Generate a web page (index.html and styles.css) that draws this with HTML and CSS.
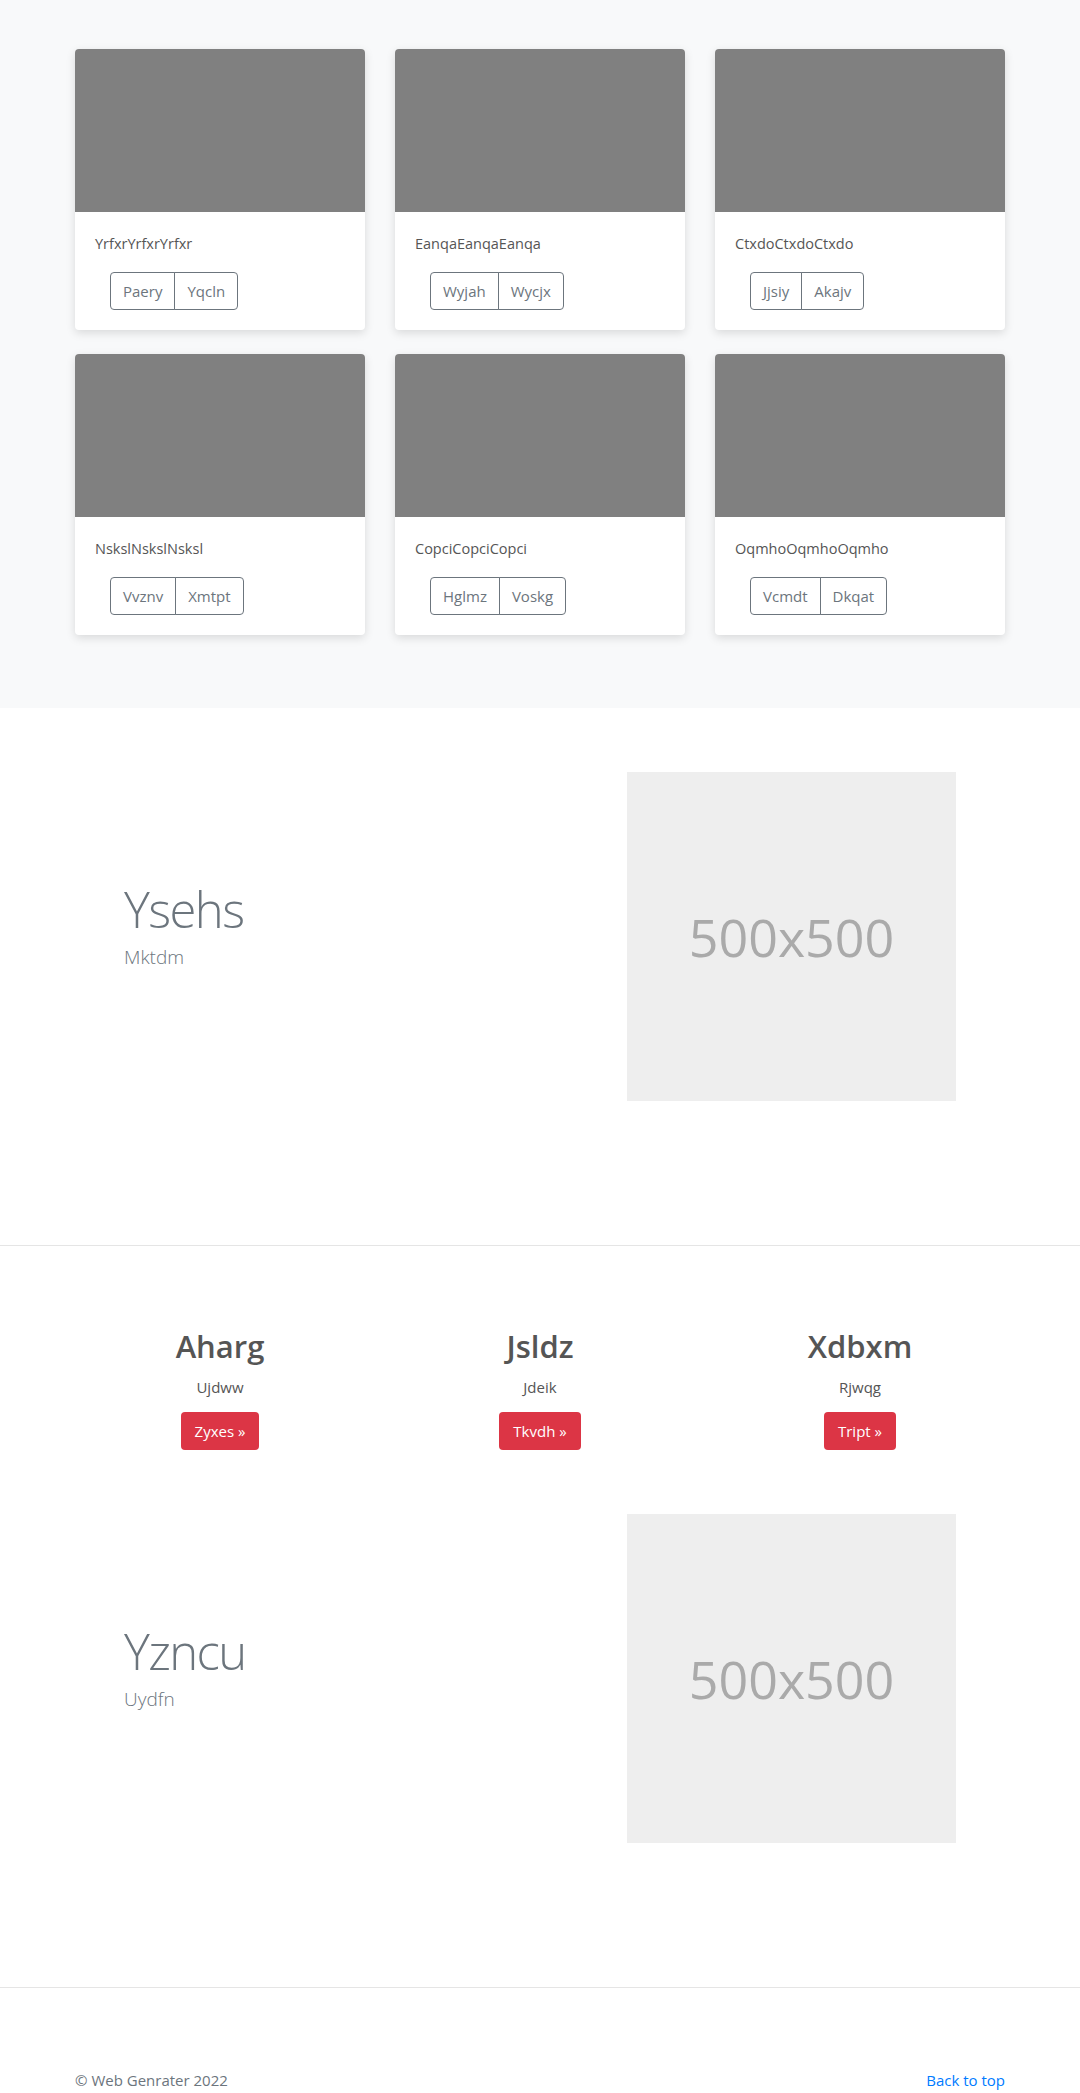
FILE: index.html
```html
<!DOCTYPE html>
<html lang="en">
<head>
<meta charset="utf-8">
<title>Album</title>
<link rel="stylesheet" href="styles.css">
</head>
<body>
<main>
  <section class="album">
    <div class="container">
      <div class="card-grid">
        <div class="card">
          <div class="card-img"></div>
          <div class="card-body">
            <p class="card-text">YrfxrYrfxrYrfxr</p>
            <div class="btn-group"><button class="btn-outline">Paery</button><button class="btn-outline">Yqcln</button></div>
          </div>
        </div>
        <div class="card">
          <div class="card-img"></div>
          <div class="card-body">
            <p class="card-text">EanqaEanqaEanqa</p>
            <div class="btn-group"><button class="btn-outline">Wyjah</button><button class="btn-outline">Wycjx</button></div>
          </div>
        </div>
        <div class="card">
          <div class="card-img"></div>
          <div class="card-body">
            <p class="card-text">CtxdoCtxdoCtxdo</p>
            <div class="btn-group"><button class="btn-outline">Jjsiy</button><button class="btn-outline">Akajv</button></div>
          </div>
        </div>
        <div class="card">
          <div class="card-img"></div>
          <div class="card-body">
            <p class="card-text">NskslNskslNsksl</p>
            <div class="btn-group"><button class="btn-outline">Vvznv</button><button class="btn-outline">Xmtpt</button></div>
          </div>
        </div>
        <div class="card">
          <div class="card-img"></div>
          <div class="card-body">
            <p class="card-text">CopciCopciCopci</p>
            <div class="btn-group"><button class="btn-outline">Hglmz</button><button class="btn-outline">Voskg</button></div>
          </div>
        </div>
        <div class="card">
          <div class="card-img"></div>
          <div class="card-body">
            <p class="card-text">OqmhoOqmhoOqmho</p>
            <div class="btn-group"><button class="btn-outline">Vcmdt</button><button class="btn-outline">Dkqat</button></div>
          </div>
        </div>
      </div>
    </div>
  </section>

  <section class="feature feature-first">
    <div class="feature-inner">
      <div class="feature-text">
        <h2 class="feature-heading">Ysehs</h2>
        <p class="lead">Mktdm</p>
      </div>
      <div class="placeholder">500x500</div>
    </div>
  </section>

  <hr class="divider">

  <section class="marketing">
    <div class="marketing-grid">
      <div class="mk-col">
        <h2 class="mk-title">Aharg</h2>
        <p class="mk-text">Ujdww</p>
        <a class="btn-danger" href="#">Zyxes &raquo;</a>
      </div>
      <div class="mk-col">
        <h2 class="mk-title">Jsldz</h2>
        <p class="mk-text">Jdeik</p>
        <a class="btn-danger" href="#">Tkvdh &raquo;</a>
      </div>
      <div class="mk-col">
        <h2 class="mk-title">Xdbxm</h2>
        <p class="mk-text">Rjwqg</p>
        <a class="btn-danger" href="#">Tript &raquo;</a>
      </div>
    </div>
  </section>

  <section class="feature feature-second">
    <div class="feature-inner">
      <div class="feature-text">
        <h2 class="feature-heading">Yzncu</h2>
        <p class="lead">Uydfn</p>
      </div>
      <div class="placeholder">500x500</div>
    </div>
  </section>

  <hr class="divider">
</main>

<footer class="footer">
  <div class="container footer-row">
    <p class="copy">&copy; Web Genrater 2022</p>
    <a class="back" href="#">Back to top</a>
  </div>
</footer>
</body>
</html>
```

FILE: styles.css
```css
* { box-sizing: border-box; }

html, body {
  margin: 0;
  padding: 0;
}

body {
  font-family: "Open Sans", "Noto Sans", sans-serif;
  font-size: 16px;
  line-height: 1.5;
  color: #212529;
  background: #fff;
}

.container {
  width: 960px;
  margin: 0 auto;
  padding: 0 15px;
}

/* Album */
.album {
  background: #f8f9fa;
  padding: 49px 0 73px;
}

.card-grid {
  display: grid;
  grid-template-columns: repeat(3, 290px);
  column-gap: 30px;
  row-gap: 24px;
}

.card {
  background: #fff;
  border-radius: 4px;
  overflow: hidden;
  box-shadow: 0 3px 10px rgba(0, 0, 0, 0.13);
}

.card-img {
  height: 163px;
  background: #808080;
}

.card-body {
  padding: 20px;
}

.card-text {
  margin: 0 0 16px;
  font-size: 14.5px;
  line-height: 24px;
  color: #555;
}

.btn-group {
  display: inline-flex;
  margin-left: 15px;
}

.btn-outline {
  font-family: inherit;
  font-size: 15px;
  line-height: 24px;
  height: 38px;
  padding: 6px 12px;
  color: #6c757d;
  background: transparent;
  border: 1px solid #6c757d;
  cursor: pointer;
}

.btn-outline:first-child {
  border-radius: 4px 0 0 4px;
}

.btn-outline:last-child {
  border-radius: 0 4px 4px 0;
  margin-left: -1px;
}

/* Featurettes */
.feature-first {
  padding: 64px 0 144px;
}

.feature-second {
  padding: 64px 0 144px;
}

.feature-inner {
  width: 960px;
  margin: 0 auto;
  padding: 0 64px;
  display: flex;
  align-items: center;
  justify-content: space-between;
}

.feature-heading {
  margin: 0 0 8px;
  font-size: 49px;
  font-weight: 300;
  line-height: 1;
  letter-spacing: -1.6px;
  color: #6c757d;
}

.lead {
  margin: 0 0 16px;
  font-size: 19px;
  font-weight: 300;
  line-height: 30px;
  color: #6c757d;
}

.placeholder {
  width: 329px;
  height: 329px;
  background: #eee;
  color: #aaa;
  font-size: 52px;
  display: flex;
  align-items: center;
  justify-content: center;
}

.divider {
  margin: 0;
  border: 0;
  border-top: 1px solid #e5e5e5;
}

/* Marketing */
.marketing {
  padding-top: 81px;
}

.marketing-grid {
  width: 960px;
  margin: 0 auto;
  display: grid;
  grid-template-columns: repeat(3, 1fr);
}

.mk-col {
  text-align: center;
}

.mk-title {
  margin: 0 0 10px;
  font-size: 31px;
  font-weight: 600;
  line-height: 38px;
  color: #555;
}

.mk-text {
  margin: 0 0 13px;
  font-size: 15px;
  line-height: 24px;
  color: #555;
}

.btn-danger {
  display: inline-block;
  height: 38px;
  padding: 7px 14px;
  font-size: 15px;
  line-height: 24px;
  color: #fff;
  background: #dc3545;
  border-radius: 4px;
  text-decoration: none;
}

/* Footer */
.footer {
  padding-top: 80px;
}

.footer-row {
  display: flex;
  justify-content: space-between;
  align-items: flex-start;
}

.copy {
  margin: 0;
  font-size: 15px;
  line-height: 24px;
  color: #6c757d;
}

.back {
  font-size: 15px;
  line-height: 24px;
  color: #007bff;
  text-decoration: none;
}
```
